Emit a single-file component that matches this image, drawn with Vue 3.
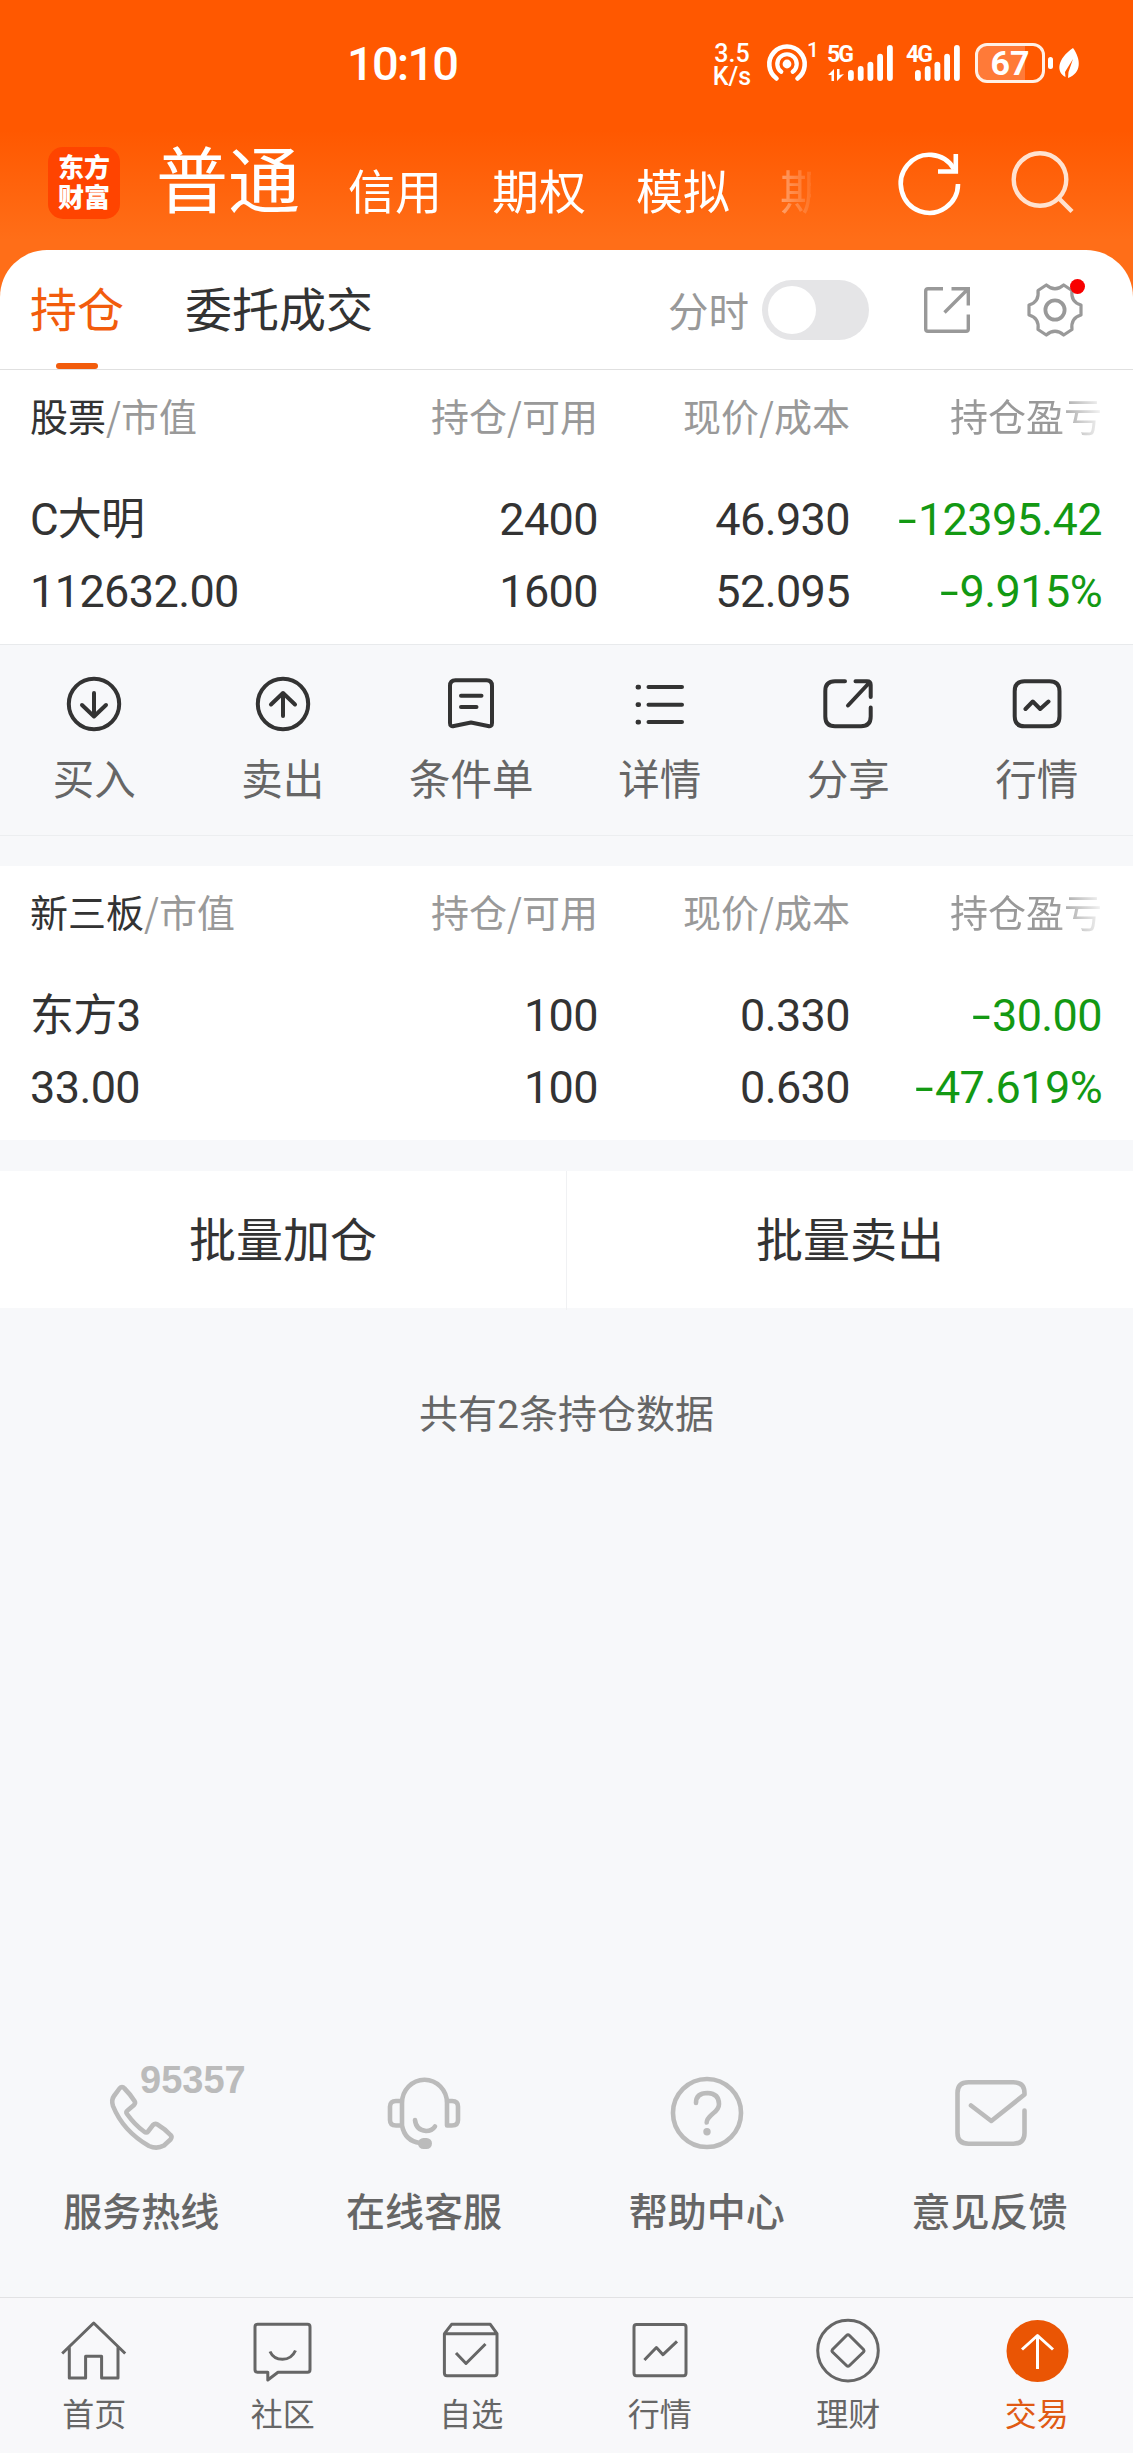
<template>
  <div class="page">
    <header class="top">
      <!-- System status bar -->
      <div class="status">
        <span class="clock">10:10</span>
        <div class="speed"><span>3.5</span><span>K/s</span></div>
        <svg class="hotspot" viewBox="0 0 40 40">
          <g fill="none" stroke="#fff" stroke-linecap="round">
            <path d="M9.5 34.5 A17.7 17.7 0 1 1 30.5 34.5" stroke-width="4.6" />
            <path d="M14.3 27.8 A9.7 9.7 0 1 1 25.7 27.8" stroke-width="4.2" />
          </g>
          <circle cx="20" cy="20" r="4.4" fill="#fff" />
        </svg>
        <span class="hot-count">1</span>
        <div class="signal">
          <span>5G</span>
          <svg viewBox="0 0 66 40">
            <path d="M0 31 L6 25 V37 H3.5 V31Z M9 25 H11.500 V31 L16 30 L9 37Z" fill="#fff" />
            <rect v-for="b in bars" :key="b.x" :x="b.x" :y="b.y" width="5.8" :height="37 - b.y" rx="2.9" fill="#fff" />
          </svg>
        </div>
        <div class="signal four">
          <span>4G</span>
          <svg viewBox="0 0 66 40">
            <rect v-for="b in bars" :key="b.x" :x="b.x - 12" :y="b.y" width="5.8" :height="37 - b.y" rx="2.9" fill="#fff" />
          </svg>
        </div>
        <div class="battery"><span>67</span></div>
        <i class="nub"></i>
        <svg class="leaf" viewBox="0 0 20 30">
          <path d="M14 0 C22 11 23 25 9 30 L9.5 24 L14 11 L6 24 L6.5 29 C-3 24 -2 11 14 0Z" fill="#fff" />
        </svg>
      </div>

      <!-- Account type switcher -->
      <nav class="accounts">
        <div class="logo"><span>东方</span><span>财富</span></div>
        <b class="current">普通</b>
        <div class="others">
          <span v-for="a in accounts" :key="a">{{ a }}</span>
        </div>
        <svg class="refresh" viewBox="0 0 66 66" fill="none" stroke="#fff" stroke-width="4.6">
          <path d="M57 19 A28.6 29 0 1 0 61 34" />
          <path d="M58.8 4 V21.5 H41" />
        </svg>
        <svg class="search" viewBox="0 0 66 66" fill="none" stroke="#ffe2d0" stroke-width="4.4">
          <circle cx="30" cy="29.5" r="26.3" />
          <path d="M48.5 48 L62 61.5" />
        </svg>
      </nav>
    </header>

    <div class="tabs">
      <span class="tab on">持仓</span>
      <span class="tab">委托成交</span>
      <span class="minute">分时</span>
      <i class="switch"></i>
      <svg class="export" viewBox="0 0 46 46" fill="none" stroke="#999" stroke-width="3.4">
        <path d="M19 1.7 H4 Q1.7 1.7 1.7 4 V42 Q1.7 44.3 4 44.3 H42 Q44.3 44.3 44.3 42 V27.5" />
        <path d="M27.5 1.7 H44.3 V18.5 M44 2 L20.5 25.5" />
      </svg>
      <div class="gear">
        <svg viewBox="0 0 60 60" fill="none" stroke="#999" stroke-width="3.2" stroke-linejoin="round">
          <path d="M21.3 5 Q30 12.5 38.7 5 L47 10.5 Q45.5 22 56 25 V35 Q45.5 38 47 49.5 L38.7 55 Q30 47.5 21.3 55 L13 49.5 Q14.5 38 4 35 V25 Q14.5 22 13 10.5Z" />
          <circle cx="30" cy="30" r="9.6" stroke-width="3.8" />
        </svg>
        <i></i>
      </div>
    </div>

    <template v-for="(s, i) in sections" :key="s.title">
      <section class="holdings">
        <div class="row head">
          <span><em>{{ s.title }}</em>/市值</span>
          <span>持仓/可用</span>
          <span>现价/成本</span>
          <span class="fade">持仓盈亏</span>
        </div>
        <div class="row" v-for="(line, n) in s.lines" :key="n">
          <span v-for="(cell, c) in line" :key="c" :class="{ loss: c === 3, name: c === 0 && n === 0 }"><i v-if="c === 3" class="minus">-</i>{{ cell }}</span>
        </div>
      </section>
      <div v-if="i === 0" class="actions">
        <div v-for="a in actions" :key="a.label">
          <svg viewBox="0 0 60 60" fill="none" stroke="#333" stroke-width="4" stroke-linecap="round" stroke-linejoin="round">
            <path :d="a.icon" />
          </svg>
          <span>{{ a.label }}</span>
        </div>
      </div>
    </template>

    <div class="batch">
      <span>批量加仓</span>
      <span>批量卖出</span>
    </div>
    <p class="count">共有2条持仓数据</p>

    <div class="services">
      <div v-for="s in services" :key="s.label">
        <svg viewBox="0 0 80 80" fill="none" stroke="#bbb" stroke-width="4.6" stroke-linecap="round" stroke-linejoin="round">
          <path :d="s.icon" />
          <rect v-if="s.mic" x="34" y="65" width="14" height="11" rx="5.5" fill="#bbb" stroke="none" />
          <circle v-if="s.dot" cx="40" cy="58.8" r="3.7" fill="#bbb" stroke="none" />
        </svg>
        <b v-if="s.phone">{{ s.phone }}</b>
        <span>{{ s.label }}</span>
      </div>
    </div>

    <footer class="bar">
      <div v-for="t in tabs" :key="t.label" :class="{ active: t.active }">
        <svg viewBox="0 0 72 72" fill="none" stroke-width="3" stroke-linejoin="round">
          <circle v-if="t.active" cx="36.5" cy="36" r="31" fill="#ea5504" stroke="none" />
          <path :d="t.icon" />
        </svg>
        <span>{{ t.label }}</span>
      </div>
    </footer>
  </div>
</template>

<script setup>
const bars = [
  { x: 20, y: 26 },
  { x: 29.8, y: 22 },
  { x: 39.5, y: 17.7 },
  { x: 49.2, y: 9.7 },
  { x: 59, y: 1 },
]

const accounts = ['信用', '期权', '模拟', '期']

const sections = [
  {
    title: '股票',
    lines: [
      ['C大明', '2400', '46.930', '12395.42'],
      ['112632.00', '1600', '52.095', '9.915%'],
    ],
  },
  {
    title: '新三板',
    lines: [
      ['东方3', '100', '0.330', '30.00'],
      ['33.00', '100', '0.630', '47.619%'],
    ],
  },
]

// 60x60 icons
const ring = 'M30 4.8 A25.2 25.2 0 1 1 30 55.2 A25.2 25.2 0 1 1 30 4.8Z '
const actions = [
  { label: '买入', icon: ring + 'M30 19 V42 M18 31 L30 42.5 L42 31' },
  { label: '卖出', icon: ring + 'M30 42 V19 M18 30.5 L30 19 L42 30.5' },
  { label: '条件单', icon: 'M14.5 6.3 H45.5 Q51 6.3 51 12 V49 Q51 53 47 52 L30 48.5 L13 52 Q9 53 9 49 V12 Q9 6.3 14.5 6.3Z M20 21.7 H40.5 M20 33 H35.5' },
  { label: '详情', icon: 'M18.5 13 H52 M18.5 30.7 H52 M18.5 48 H52 M7.6 12.7 h1.4 v.8 h-1.4Z M7.6 30.3 h1.4 v.8 h-1.4Z M7.6 47.7 h1.4 v.8 h-1.4Z' },
  { label: '分享', icon: 'M27 7.3 H17 Q7.3 7.3 7.3 17 V42.5 Q7.3 52.3 17 52.3 H43 Q52.7 52.3 52.7 42.5 V33.5 M37.5 7.3 H49 Q52.7 7.3 52.7 11 V23 M51.5 8.5 L30 31.5' },
  { label: '行情', icon: 'M17.5 7.3 H42.5 Q52.5 7.3 52.5 17.3 V42.3 Q52.5 52.3 42.5 52.3 H17.5 Q7.7 52.3 7.7 42.3 V17.3 Q7.7 7.3 17.5 7.3Z M18.5 35 L25.8 27.5 L33.2 35 L41.5 27.5' },
]

// 80x80 icons
const services = [
  { label: '服务热线', phone: '95357', icon: 'M18.5 15.5 Q21 12.5 23.5 15.5 Q29 21 33.5 28 Q34.8 30 33 32 L26.5 37.5 Q24.6 39 26 41 Q34 52 43 58.5 Q45.5 60.5 47 58.5 L52 52 Q54 50 56.5 51.5 Q64 56 69.5 62 Q71.5 64 69.5 66.5 L63 72.5 Q56 76.5 48 73 Q22 58 12 33 Q10 27 13 23 Z' },
  { label: '在线客服', mic: true, icon: 'M18 53 V30 A22.5 23.300 0 0 1 40.500 6.700 A22.500 23.300 0 0 1 63 30 V52.5 H68 Q74 52.5 74 47 V33.5 Q74 28 68 28 H63 M18 28 H12 Q6 28 6 33.5 V47 Q6 52.5 12 52.5 H18 Q21 68 36 70 M31 47 Q32 57 42 58 Q48 58 51 53.5' },
  { label: '帮助中心', dot: true, icon: 'M40 6 A34 34 0 1 1 40 74 A34 34 0 1 1 40 6Z M29 30 Q29 20 40.5 20 Q52 20.5 52 31 Q52 36 46 40.5 Q39.5 46 39.7 49.5' },
  { label: '意见反馈', icon: 'M21 32.5 L41.3 48 L74.5 21.5 V20 Q74.5 9.3 63.5 9.3 H18.5 Q7.5 9.3 7.5 20 V60 Q7.5 70.7 18.5 70.7 H63.5 Q74.5 70.7 74.5 60 V37.5' },
]

// 72x72 icons
const tabs = [
  { label: '首页', icon: 'M4.2 38.5 L35.7 8 L67.2 38.5 M11.3 32 V63 H27.6 V41.3 H43.6 V63 H60 V32' },
  { label: '社区', icon: 'M10.5 9.3 H60.5 Q63 9.3 63 12 V54.5 Q63 57.3 60.5 57.3 H31 L20.8 65 V57.3 H10.5 Q8 57.3 8 54.5 V12 Q8 9.3 10.5 9.3Z M23 36.5 Q26.5 44.3 35.5 44.3 Q44.5 44.3 48.5 35.5' },
  { label: '自选', icon: 'M9.4 18.7 L16.6 9.3 H55.3 L62 18.7 V58 Q62 60.7 59.5 60.7 H12 Q9.4 60.7 9.4 58 V18.7 H62 M21 38 L31 48.5 L50.5 29' },
  { label: '行情', icon: 'M12.5 9.5 H59.5 Q62 9.5 62 12 V58 Q62 60.7 59.5 60.7 H12.5 Q10 60.7 10 58 V12 Q10 9.5 12.5 9.5Z M20.4 45 L32.4 32.5 L39 39.7 L53 26.3' },
  { label: '理财', icon: 'M36 5.3 A30.3 30.3 0 1 1 36 65.9 A30.3 30.3 0 1 1 36 5.3Z M34.5 20.5 Q36 19 37.5 20.5 L51.5 34.5 Q52.5 35.8 51.5 37 L37.5 50.5 Q36 52 34.5 50.5 L20.5 37 Q19.5 35.8 20.5 34.5Z' },
  { label: '交易', active: true, icon: 'M36.5 54 V20.5 M21 34.5 L36.5 20.5 L52 34.5' },
]
</script>

<style>
body {
  background: #f7f8fa;
}
</style>

<style scoped>
.page {
  width: 1133px;
  height: 2453px;
  display: flex;
  flex-direction: column;
  overflow: hidden;
  background: #f7f8fa;
  color: #333;
  font-family: Roboto, 'Noto Sans CJK SC', sans-serif;
}
svg {
  display: block;
  flex: none;
  overflow: visible;
}
span, b {
  white-space: nowrap;
}

/* Orange top area, runs behind the rounded corners of the tabs row */
.top {
  height: 300px;
  margin-bottom: -50px;
  flex: none;
  color: #fff;
  background: linear-gradient(#ff5800 130px, #ff6e18 240px);
}
.status {
  height: 125px;
  display: flex;
  align-items: center;
}
.clock {
  width: 365px;
  margin-left: 347px;
  font-size: 47px;
  font-weight: 500;
  letter-spacing: -1.8px;
  padding-top: 2px;
}
.speed {
  width: 40px;
  display: flex;
  flex-direction: column;
  align-items: center;
  font-size: 25px;
  line-height: 23px;
  font-weight: 500;
  padding-top: 4px;
}
.hotspot {
  width: 40px;
  height: 40px;
  margin: 2px 0 0 15px;
}
.hot-count {
  width: 20px;
  margin-top: -26px;
  font-size: 21px;
  font-weight: 500;
}
.signal {
  position: relative;
  width: 66px;
  height: 40px;
  margin: 2px 0 0 1px;
}
.signal svg {
  width: 66px;
  height: 40px;
}
.signal span {
  position: absolute;
  left: -1px;
  top: -1px;
  font-size: 23px;
  line-height: 23px;
  font-weight: 700;
  letter-spacing: -2px;
}
.signal.four {
  margin-left: 13px;
}
.battery {
  box-sizing: border-box;
  width: 70px;
  height: 40px;
  border: 3px solid #fff0e6;
  border-radius: 12px;
  margin-left: 2px;
  display: flex;
  align-items: center;
  justify-content: center;
  background: linear-gradient(90deg, #ff7a38 47px, transparent 47px);
}
.battery span {
  font-size: 34px;
  font-weight: 700;
}
.nub {
  width: 5px;
  height: 12px;
  border-radius: 3px;
  background: #fff;
  margin-left: 3px;
}
.leaf {
  width: 20px;
  height: 30px;
  margin-left: 6px;
}

/* Account switcher */
.accounts {
  height: 125px;
  display: flex;
  align-items: flex-start;
}
.logo {
  box-sizing: border-box;
  width: 72px;
  height: 72px;
  margin: 22px 0 0 48px;
  padding-top: 6px;
  border-radius: 15px;
  background: #ff4400;
  display: flex;
  flex-direction: column;
  align-items: center;
  font-size: 26px;
  line-height: 30px;
  font-weight: 900;
}
.current {
  margin: 6px 0 0 36px;
  font-size: 72px;
  line-height: 104px;
  font-weight: 400;
}
.others {
  width: 463px;
  margin: 33px 0 0 48px;
  display: flex;
  gap: 50px;
  overflow: hidden;
  font-size: 47px;
  line-height: 70px;
  -webkit-mask-image: linear-gradient(90deg, #000 415px, rgba(0, 0, 0, 0.35) 435px, rgba(0, 0, 0, 0.1) 462px);
  mask-image: linear-gradient(90deg, #000 415px, rgba(0, 0, 0, 0.35) 435px, rgba(0, 0, 0, 0.1) 462px);
}
.refresh {
  width: 66px;
  height: 66px;
  margin: 25px 0 0 86px;
}
.search {
  width: 66px;
  height: 66px;
  margin: 25px 0 0 47px;
}

/* Tabs row */
.tabs {
  box-sizing: border-box;
  height: 120px;
  flex: none;
  display: flex;
  align-items: center;
  padding-left: 30px;
  border-bottom: 1px solid #e0e0e0;
  border-radius: 47px 47px 0 0;
  background: #fff;
}
.tab {
  position: relative;
  font-size: 47px;
  line-height: 121px;
  height: 119px;
  margin-right: 61px;
}
.tab.on {
  color: #f25c0c;
}
.tab.on::after {
  content: '';
  position: absolute;
  left: 26px;
  bottom: 0;
  width: 42px;
  height: 6px;
  border-radius: 3px;
  background: #f25c0c;
}
.minute {
  width: 94px;
  margin-left: 234px;
  color: #999;
  font-size: 40.5px;
}
.switch {
  box-sizing: border-box;
  width: 107px;
  height: 60px;
  padding: 6px;
  border-radius: 30px;
  background: #e5e5e7;
}
.switch::before {
  content: '';
  display: block;
  width: 48px;
  height: 48px;
  border-radius: 50%;
  background: #fff;
}
.export {
  width: 46px;
  height: 46px;
  margin-left: 55px;
}
.gear {
  position: relative;
  width: 60px;
  height: 60px;
  margin-left: 55px;
}
.gear i {
  position: absolute;
  left: 45px;
  top: -1px;
  width: 15px;
  height: 15px;
  border-radius: 50%;
  background: #f80000;
}

/* Holdings tables */
.holdings {
  box-sizing: border-box;
  height: 274px;
  flex: none;
  padding: 9px 31px 0 30px;
  background: #fff;
}
.row {
  display: grid;
  grid-template-columns: 1fr 252px 252px 252px;
  height: 72px;
  line-height: 72px;
  font-size: 45px;
  letter-spacing: -0.6px;
}
.row .name {
  font-size: 44px;
  letter-spacing: -0.8px;
}
.row span + span {
  text-align: right;
}
.row.head {
  height: 105px;
  color: #999;
  font-size: 38px;
  font-family: 'Noto Sans CJK SC', sans-serif;
  letter-spacing: 0;
}
.row em {
  font-style: normal;
  color: #333;
}
.fade {
  -webkit-mask-image: linear-gradient(90deg, #000 205px, rgba(0, 0, 0, 0.1) 252px);
  mask-image: linear-gradient(90deg, #000 205px, rgba(0, 0, 0, 0.1) 252px);
}
.loss {
  color: #139913;
}
.minus {
  display: inline-block;
  font-style: normal;
  margin-right: 5px;
  transform: scaleX(1.5);
}

/* Expanded row actions */
.actions {
  box-sizing: border-box;
  height: 192px;
  margin-bottom: 30px;
  flex: none;
  display: grid;
  grid-template-columns: repeat(6, 1fr);
  padding: 29px 2px 0 0;
  border-top: 1px solid #e8eaec;
  border-bottom: 1px solid #eceef0;
}
.actions div {
  display: flex;
  flex-direction: column;
  align-items: center;
  font-size: 41.5px;
  line-height: 60px;
  color: #666;
}
.actions svg {
  width: 60px;
  height: 60px;
  margin-bottom: 17px;
}

.batch {
  height: 137px;
  margin-top: 31px;
  flex: none;
  display: grid;
  grid-template-columns: 566px 1fr;
  background: #fff;
  font-size: 47px;
  line-height: 139px;
  text-align: center;
}
.batch span + span {
  border-left: 1px solid #f0f1f3;
}
.count {
  margin: 78px 0 0;
  font-size: 39px;
  line-height: 58px;
  text-align: center;
  color: #666;
}

/* Service links */
.services {
  height: 224px;
  margin-top: auto;
  padding-right: 2px;
  flex: none;
  display: grid;
  grid-template-columns: repeat(4, 1fr);
}
.services div {
  position: relative;
  display: flex;
  flex-direction: column;
  align-items: center;
  font-size: 39px;
  line-height: 58px;
  font-weight: 500;
  color: #666;
}
.services svg {
  width: 80px;
  height: 80px;
  margin-bottom: 31px;
}
.services b {
  position: absolute;
  left: 140px;
  top: -12px;
  font: 700 38px/38px 'Liberation Sans', sans-serif;
  color: #bbb;
}

/* Bottom tab bar */
.bar {
  box-sizing: border-box;
  height: 156px;
  flex: none;
  display: grid;
  grid-template-columns: repeat(6, 1fr);
  padding: 17px 2px 0 0;
  border-top: 1px solid #e2e2e4;
  background: #f8f8fa;
}
.bar div {
  display: flex;
  flex-direction: column;
  align-items: center;
  font-size: 32px;
  line-height: 48px;
  color: #666;
}
.bar svg {
  width: 72px;
  height: 72px;
  margin-bottom: 4px;
  stroke: #666;
}
.bar .active {
  color: #e05a14;
}
.bar .active svg {
  stroke: #fff;
}
</style>
